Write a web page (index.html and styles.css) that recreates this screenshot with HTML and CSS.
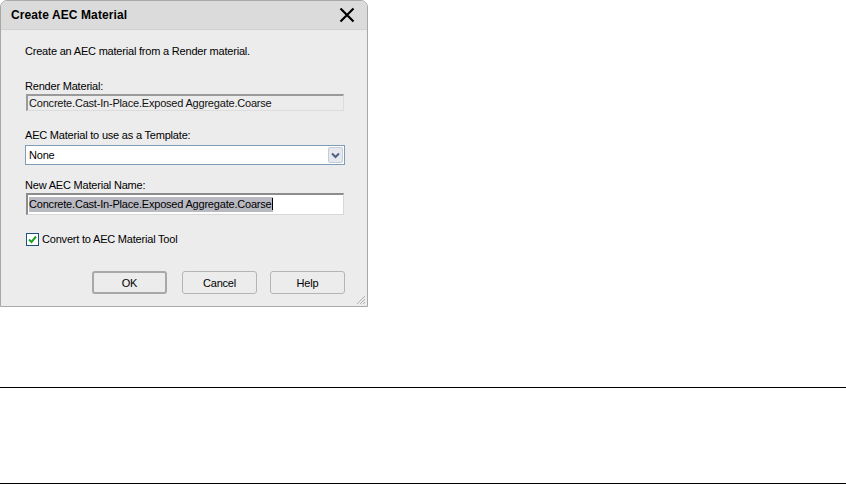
FILE: index.html
```html
<!DOCTYPE html>
<html>
<head>
<meta charset="utf-8">
<link rel="stylesheet" href="styles.css">
</head>
<body>
<div class="page">
  <div class="dialog">
    <div class="titlebar">
      <span class="title">Create AEC Material</span>
      <svg class="close" width="16" height="16" viewBox="0 0 16 16"><path d="M1.5 1.5 L14.5 14.5 M14.5 1.5 L1.5 14.5" stroke="#000" stroke-width="2.2" fill="none"/></svg>
    </div>
    <div class="content">
      <div class="intro">Create an AEC material from a Render material.</div>
      <div class="label l-render">Render Material:</div>
      <div class="field disabled">Concrete.Cast-In-Place.Exposed Aggregate.Coarse</div>
      <div class="label l-template">AEC Material to use as a Template:</div>
      <div class="combo">
        <span class="combo-text">None</span>
        <span class="combo-btn"><svg width="9" height="7" viewBox="0 0 9 7"><path d="M1 1.5 L4.5 5 L8 1.5" stroke="#4d6185" stroke-width="2" fill="none"/></svg></span>
      </div>
      <div class="label l-name">New AEC Material Name:</div>
      <div class="field edit"><span class="sel">Concrete.Cast-In-Place.Exposed Aggregate.Coars<span class="caret">e</span></span></div>
      <div class="check-row">
        <span class="checkbox"><svg width="11" height="11" viewBox="0 0 11 11"><path d="M2 5.5 L4.5 8 L9 2.5" stroke="#21a121" stroke-width="2" fill="none"/></svg></span>
        <span>Convert to AEC Material Tool</span>
      </div>
      <div class="buttons">
        <div class="btn default">OK</div>
        <div class="btn">Cancel</div>
        <div class="btn">Help</div>
      </div>
    </div>
    <svg class="grip" width="12" height="12" viewBox="0 0 12 12"><path d="M11 3 L3 11 M11 6 L6 11 M11 9 L9 11" stroke="#b0b0b0" stroke-width="1" fill="none"/></svg>
  </div>
  <div class="rule r1"></div>
  <div class="rule r2"></div>
</div>
</body>
</html>
```
FILE: styles.css
```css
html, body {
  margin: 0;
  padding: 0;
  background: #ffffff;
}
.page {
  width: 846px;
  height: 485px;
  font-family: "Liberation Sans", Arial, sans-serif;
  font-size: 11px;
  letter-spacing: -0.2px;
  color: #000;
  display: flex;
  flex-direction: column;
}
.dialog {
  position: relative;
  width: 368px;
  height: 307px;
  border: 1px solid #a8a8a8;
  border-radius: 7px 7px 0 0;
  background: #ececec;
  box-sizing: border-box;
  display: flex;
  flex-direction: column;
  overflow: hidden;
}
.titlebar {
  height: 29px;
  flex: none;
  background: #dbdbdb;
  border-bottom: 1px solid #d0d0d0;
  display: flex;
  align-items: center;
  justify-content: space-between;
  padding: 0 12px 0 10px;
  box-sizing: border-box;
}
.title {
  font-weight: bold;
  font-size: 12px;
  letter-spacing: 0.1px;
}
.close {
  display: block;
}
.content {
  padding: 0 22px 0 24px;
  display: flex;
  flex-direction: column;
}
.intro {
  line-height: 13px;
  margin-top: 15px;
}
.label {
  line-height: 13px;
}
.l-render { margin-top: 22px; }
.l-template { margin-top: 18px; }
.l-name { margin-top: 14px; }
.field {
  height: 17px;
  box-sizing: border-box;
  line-height: 14px;
  padding-left: 1px;
  margin-top: 1px;
  white-space: nowrap;
  overflow: hidden;
}
.field.disabled {
  margin-left: 1px;
  margin-right: 1px;
  background: #ececec;
  border-top: 2px solid #9a9a9a;
  border-left: 2px solid #9a9a9a;
  border-right: 1px solid #dcdcdc;
  border-bottom: 1px solid #dcdcdc;
  color: #111;
}
.field.edit {
  height: 22px;
  margin-top: 1px;
  margin-left: 1px;
  margin-right: 1px;
  background: #fff;
  border-top: 2px solid #8c8c8c;
  border-left: 2px solid #8c8c8c;
  border-right: 1px solid #d8d8d8;
  border-bottom: 1px solid #d8d8d8;
  padding-top: 2px;
  padding-left: 1px;
}
.sel {
  background: #b9b9c2;
  padding: 1px 0 2px 0;
}
.caret {
  border-right: 1px solid #000;
}
.combo {
  height: 20px;
  margin-top: 3px;
  box-sizing: border-box;
  border: 1px solid #7f9db9;
  background: #fff;
  display: flex;
  align-items: center;
  justify-content: space-between;
}
.combo-text {
  padding-left: 3px;
}
.combo-btn {
  width: 15px;
  height: 16px;
  margin-right: 1px;
  box-sizing: border-box;
  border: 1px solid #c3ccdb;
  border-radius: 2px;
  background: #e6e8ee;
  display: flex;
  align-items: center;
  justify-content: center;
}
.check-row {
  display: flex;
  align-items: center;
  gap: 3px;
  margin-top: 18px;
  line-height: 13px;
  margin-left: 1px;
}
.checkbox {
  width: 13px;
  height: 13px;
  box-sizing: border-box;
  border: 1px solid #1c5180;
  background: #fff;
  display: flex;
  align-items: center;
  justify-content: center;
}
.buttons {
  display: flex;
  justify-content: flex-end;
  gap: 13px;
  margin-top: 25px;
  margin-right: 0px;
}
.btn {
  width: 75px;
  height: 23px;
  box-sizing: border-box;
  border: 1px solid #b4b4b4;
  border-radius: 3px;
  background: #ececec;
  display: flex;
  align-items: center;
  justify-content: center;
}
.btn.default {
  border: 2px solid #a8a8a8;
  margin-right: 2px;
}
.grip {
  position: absolute;
  right: 1px;
  bottom: 1px;
}
.rule {
  height: 1px;
  background: #000;
  width: 846px;
  flex: none;
}
.r1 { margin-top: 80px; }
.r2 { margin-top: 95px; }
```
